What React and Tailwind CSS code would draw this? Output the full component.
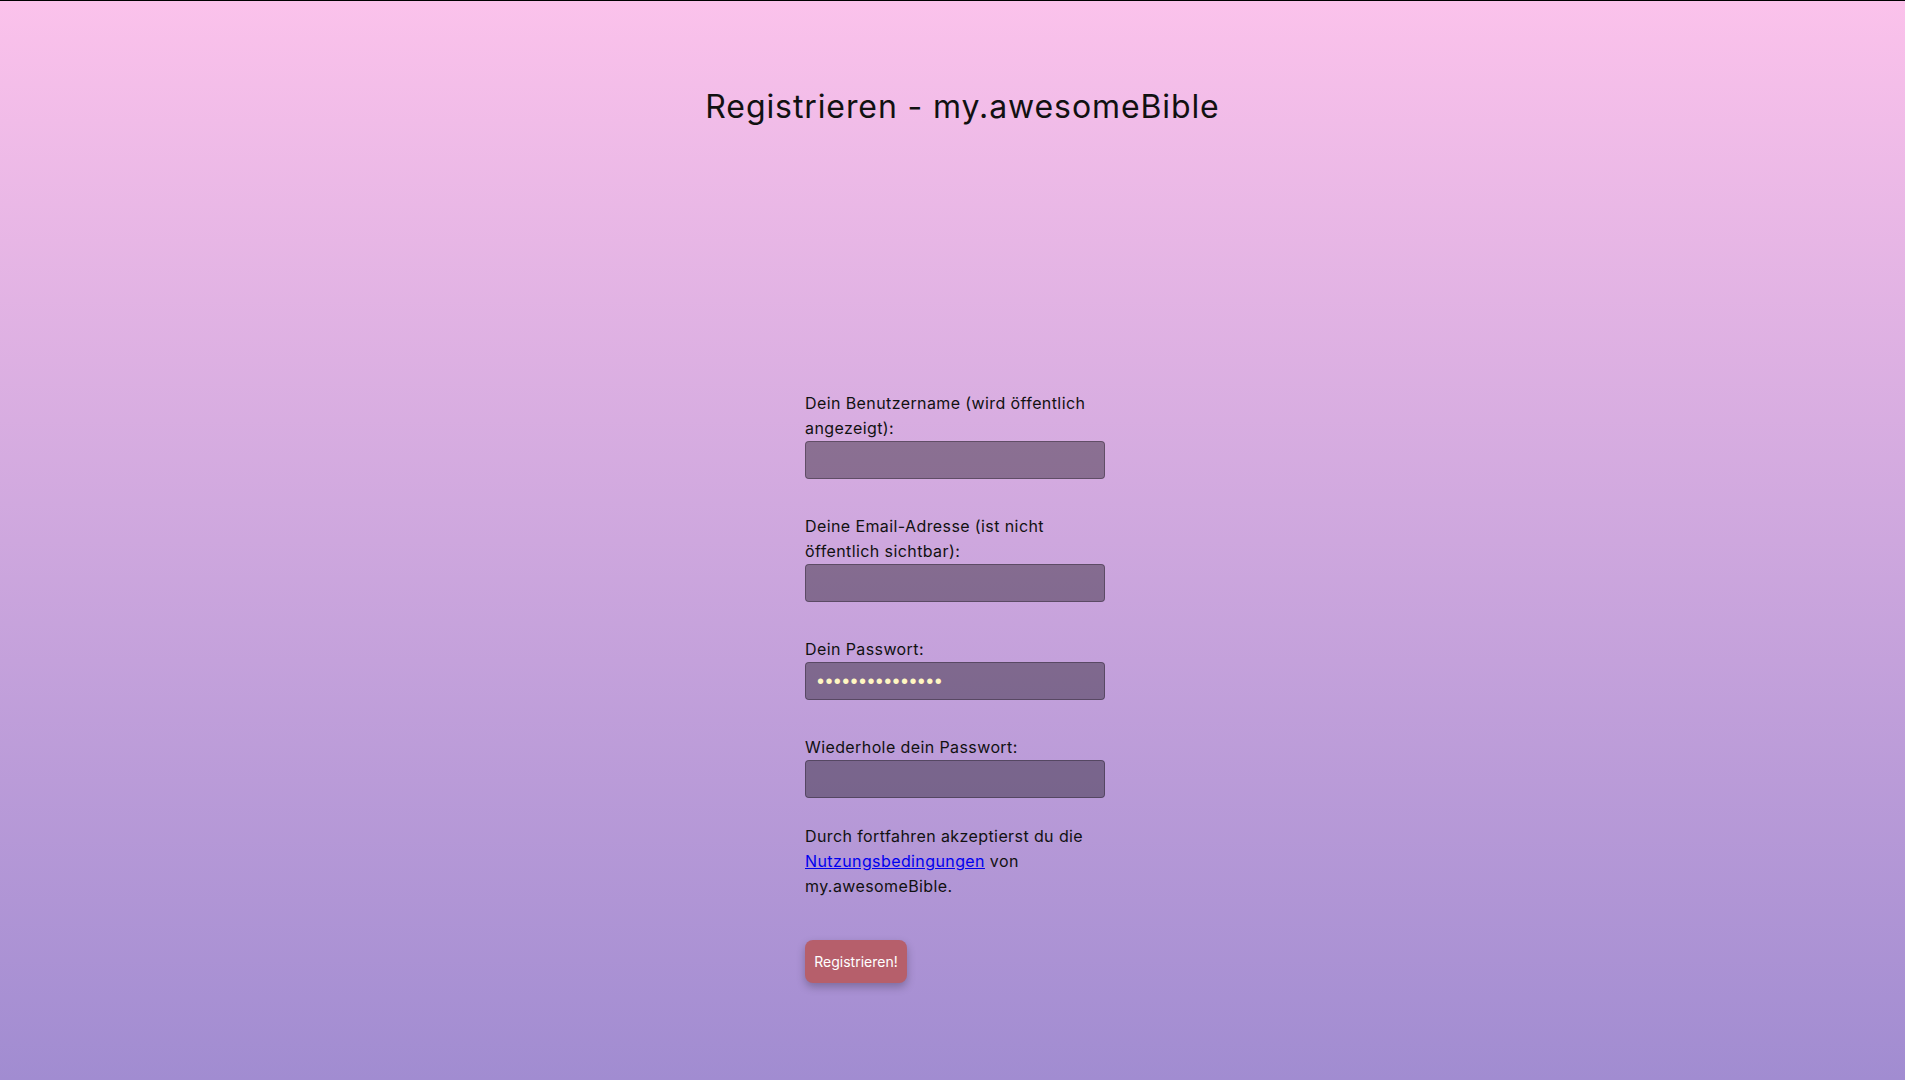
import React from 'react';

const Field = ({ label, type = 'text', value, className = '' }) => (
  <label className={`block ${className}`}>
    <span className="block text-[16px] leading-[25px] tracking-[0.4px] text-[#111]">{label}</span>
    <input
      type={type}
      defaultValue={value}
      className={`block w-[300px] h-[38px] px-[11px] rounded-[4px] border border-black/30 bg-black/35 text-[#fff6c2] outline-none ${
        type === 'password'
          ? "font-['Liberation_Sans',sans-serif] text-[20px] tracking-[1.4px]"
          : 'text-[16px]'
      }`}
    />
  </label>
);

const App = () => {
  return (
    <div className="min-h-screen border-t border-black bg-[linear-gradient(to_top,#a18cd1_0%,#fbc2eb_100%)] font-['Inter','Liberation_Sans',sans-serif] text-[#111]">
      <h1 className="pt-[82px] pl-[20px] text-center text-[32px] leading-[48px] font-normal tracking-[0.9px]">
        Registrieren - my.awesomeBible
      </h1>

      <div className="flex justify-center pl-[5px] mt-[260px]">
        <form className="w-[300px]" onSubmit={(e) => e.preventDefault()}>
          <Field
            label={<>Dein Benutzername (wird öffentlich<br />angezeigt):</>}
          />
          <Field
            className="mt-[35px]"
            label={<>Deine Email-Adresse (ist nicht<br />öffentlich sichtbar):</>}
            type="email"
          />
          <Field className="mt-[35px]" label="Dein Passwort:" type="password" value="passwort1234567" />
          <Field className="mt-[35px]" label="Wiederhole dein Passwort:" type="password" />

          <p className="mt-[26px] text-[16px] leading-[25px] tracking-[0.4px]">
            Durch fortfahren akzeptierst du die
            <br />
            <a href="#" className="text-[#0000ee] underline">Nutzungsbedingungen</a> von
            <br />
            my.awesomeBible.
          </p>

          <button
            type="submit"
            className="mt-[41px] w-[102px] h-[43px] rounded-[8px] bg-[#b65f6b] text-white text-[14px] shadow-[0_4px_8px_rgba(0,0,0,0.25)]"
          >
            Registrieren!
          </button>
        </form>
      </div>
    </div>
  );
};

export default App;
